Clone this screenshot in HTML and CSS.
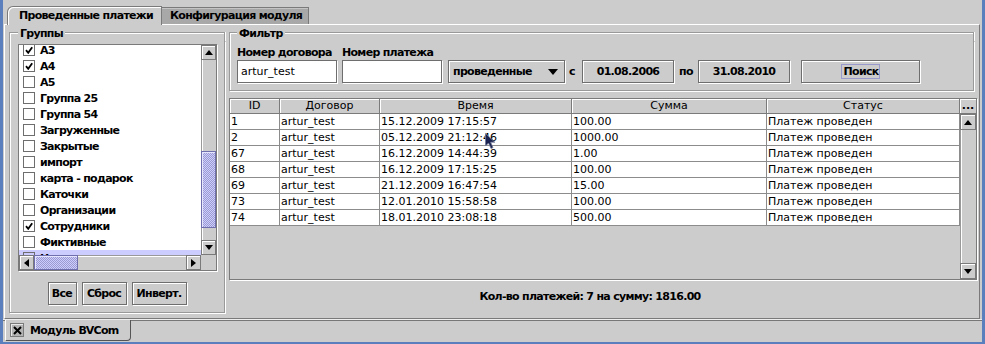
FILE: index.html
```html
<!DOCTYPE html>
<html lang="ru">
<head>
<meta charset="utf-8">
<title>Модуль BVCom</title>
<link rel="stylesheet" href="styles.css">
</head>
<body>
<div class="frame">
  <div class="main">
    <div class="tabs">
      <div class="tab tab-sel">Проведенные платежи</div>
      <div class="tab tab-off">Конфигурация модуля</div>
    </div>
    <div class="content">
      <section class="tbox groups">
        <div class="ttl"><span>Группы</span></div>
        <div class="tbody-box gbody">
          <div class="list-scroll">
            <div class="list-view">
              <div class="list">
                <div class="item"><span class="cb"><svg width="8" height="8" viewBox="0 0 8 8"><path d="M1 4.2 L3.2 6.8 L7.2 1.2" fill="none" stroke="#000" stroke-width="1.8"/></svg></span>А3</div>
                <div class="item"><span class="cb"><svg width="8" height="8" viewBox="0 0 8 8"><path d="M1 4.2 L3.2 6.8 L7.2 1.2" fill="none" stroke="#000" stroke-width="1.8"/></svg></span>А4</div>
                <div class="item"><span class="cb"></span>А5</div>
                <div class="item"><span class="cb"></span>Группа 25</div>
                <div class="item"><span class="cb"></span>Группа 54</div>
                <div class="item"><span class="cb"></span>Загруженные</div>
                <div class="item"><span class="cb"></span>Закрытые</div>
                <div class="item"><span class="cb"></span>импорт</div>
                <div class="item"><span class="cb"></span>карта - подарок</div>
                <div class="item"><span class="cb"></span>Каточки</div>
                <div class="item"><span class="cb"></span>Организации</div>
                <div class="item"><span class="cb"><svg width="8" height="8" viewBox="0 0 8 8"><path d="M1 4.2 L3.2 6.8 L7.2 1.2" fill="none" stroke="#000" stroke-width="1.8"/></svg></span>Сотрудники</div>
                <div class="item"><span class="cb"></span>Фиктивные</div>
                <div class="item hl"><span class="cb"></span>Новые</div>
              </div>
            </div>
            <div class="vbar">
              <div class="arr"><svg width="8" height="5" viewBox="0 0 8 5"><polygon points="0,5 4,0 8,5" fill="#000"/></svg></div>
              <div class="track vtrack"><div class="thumb vthumb"></div></div>
              <div class="arr"><svg width="8" height="5" viewBox="0 0 8 5"><polygon points="0,0 8,0 4,5" fill="#000"/></svg></div>
            </div>
            <div class="hbar">
              <div class="arr"><svg width="5" height="8" viewBox="0 0 5 8"><polygon points="5,0 5,8 0,4" fill="#000"/></svg></div>
              <div class="track htrack"><div class="thumb hthumb"></div></div>
              <div class="arr"><svg width="5" height="8" viewBox="0 0 5 8"><polygon points="0,0 5,4 0,8" fill="#000"/></svg></div>
            </div>
            <div class="corner"></div>
          </div>
          <div class="btns">
            <div class="btn b-all">Все</div>
            <div class="btn b-reset">Сброс</div>
            <div class="btn b-inv">Инверт.</div>
          </div>
        </div>
      </section>
      <div class="right">
        <section class="tbox filter">
          <div class="ttl ttl-filter"><span>Фильтр</span></div>
          <div class="tbody-box frow">
            <div class="fcol c1">
              <div class="flabel">Номер договора</div>
              <div class="tf">artur_test</div>
            </div>
            <div class="fcol c2">
              <div class="flabel">Номер платежа</div>
              <div class="tf"></div>
            </div>
            <div class="combo"><span>проведенные</span><svg width="10" height="6" viewBox="0 0 10 6"><polygon points="0,0 10,0 5,6" fill="#000"/></svg></div>
            <div class="sep s1">с</div>
            <div class="btn date">01.08.2006</div>
            <div class="sep s2">по</div>
            <div class="btn date">31.08.2010</div>
            <div class="btn search"><span class="focus">Поиск</span></div>
          </div>
        </section>
        <div class="tscroll">
          <div class="thead">
            <div class="th">ID</div>
            <div class="th">Договор</div>
            <div class="th">Время</div>
            <div class="th">Сумма</div>
            <div class="th">Статус</div>
          </div>
          <div class="tcorner">...</div>
          <div class="tbody">
            <div class="tr"><div class="td">1</div><div class="td">artur_test</div><div class="td">15.12.2009 17:15:57</div><div class="td">100.00</div><div class="td">Платеж проведен</div></div>
            <div class="tr"><div class="td">2</div><div class="td">artur_test</div><div class="td">05.12.2009 21:12:46</div><div class="td">1000.00</div><div class="td">Платеж проведен</div></div>
            <div class="tr"><div class="td">67</div><div class="td">artur_test</div><div class="td">16.12.2009 14:44:39</div><div class="td">1.00</div><div class="td">Платеж проведен</div></div>
            <div class="tr"><div class="td">68</div><div class="td">artur_test</div><div class="td">16.12.2009 17:15:25</div><div class="td">100.00</div><div class="td">Платеж проведен</div></div>
            <div class="tr"><div class="td">69</div><div class="td">artur_test</div><div class="td">21.12.2009 16:47:54</div><div class="td">15.00</div><div class="td">Платеж проведен</div></div>
            <div class="tr"><div class="td">73</div><div class="td">artur_test</div><div class="td">12.01.2010 15:58:58</div><div class="td">100.00</div><div class="td">Платеж проведен</div></div>
            <div class="tr"><div class="td">74</div><div class="td">artur_test</div><div class="td">18.01.2010 23:08:18</div><div class="td">500.00</div><div class="td">Платеж проведен</div></div>
            <svg class="cursor" width="11" height="17" viewBox="0 0 11 17"><polygon points="0.5,0.5 0.5,13 3.5,10 6,15.5 8,14.6 5.6,9.2 9.8,9.2" fill="#1b2450" stroke="#6f7796" stroke-width="0.8"/></svg>
          </div>
          <div class="vbar tvbar">
            <div class="arr tarr"><svg width="8" height="5" viewBox="0 0 8 5"><polygon points="0,5 4,0 8,5" fill="#000"/></svg></div>
            <div class="track vtrack"></div>
            <div class="arr tarr"><svg width="8" height="5" viewBox="0 0 8 5"><polygon points="0,0 8,0 4,5" fill="#000"/></svg></div>
          </div>
        </div>
        <div class="summary">Кол-во платежей: 7 на сумму: 1816.00</div>
      </div>
    </div>
  </div>
  <div class="btabs">
    <div class="btab"><span class="xbox"><svg width="9" height="9" viewBox="0 0 9 9"><path d="M1 1 L8 8 M8 1 L1 8" stroke="#000" stroke-width="2"/></svg></span>Модуль BVCom</div>
  </div>
</div>
</body>
</html>
```

FILE: styles.css
```css
* { box-sizing: border-box; }
html, body { margin: 0; padding: 0; }
body {
  width: 985px;
  height: 344px;
  overflow: hidden;
  background: #ccc;
  font-family: "DejaVu Sans", sans-serif;
  font-size: 11px;
  color: #000;
}
.tab, .ttl, .item, .btn, .flabel, .combo, .sep, .summary, .btab {
  font-weight: bold;
  letter-spacing: -0.7px;
}
.frame {
  width: 985px;
  height: 344px;
  border-left: 3px solid #5b7ebc;
  border-right: 3px solid #5b7ebc;
  border-bottom: 2px solid #5b7ebc;
  background: #ccc;
}
.main {
  height: 321px;
  padding: 6px 2px 0 1px;
  border-bottom: 1px solid #777;
  box-shadow: inset 0 -1px #eeeeee;
}
.tabs {
  display: flex;
  height: 18px;
  padding-left: 3px;
  position: relative;
  z-index: 1;
}
.tab {
  white-space: nowrap;
  line-height: 16px;
}
.tab-sel {
  width: 155px;
  height: 19px;
  padding: 1px 0 0 11px;
  background: #ccc;
  border: 1px solid #7a7a7a;
  border-bottom: 0;
  border-top-left-radius: 6px;
  box-shadow: inset 1px 1px #fff;
}
.tab-off {
  width: 147px;
  height: 17px;
  margin-top: 1px;
  padding-left: 8px;
  background: #a8a8a8;
  border-top: 1px solid #7a7a7a;
  border-right: 1px solid #7a7a7a;
  box-shadow: inset 0 1px #c4c4c4;
}
.content {
  height: 295px;
  display: flex;
  gap: 4px;
  padding: 2px 0 0 4px;
  border: 1px solid #7a7a7a;
  border-top-color: #fff;
  border-left-color: #fff;
}

/* titled (etched) boxes */
.tbox {
  display: flex;
  flex-direction: column;
}
.ttl {
  flex: none;
  display: flex;
  height: 14px;
  line-height: 14px;
  white-space: nowrap;
}
.ttl span { padding: 0 2px; }
.ttl::before,
.ttl::after {
  content: "";
  align-self: flex-end;
  height: 8px;
  border-top: 1px solid #999;
}
.ttl::before {
  flex: none;
  width: 8px;
  border-left: 1px solid #999;
  box-shadow: inset 1px 1px #fff;
}
.ttl-filter::before { width: 7px; }
.ttl::after {
  flex: 1;
  border-right: 1px solid #999;
  box-shadow: inset 0 1px #fff, 1px 0 #fff;
}
.tbody-box {
  flex: 1;
  border: 1px solid #999;
  border-top: 0;
  box-shadow: inset 1px 0 #fff, 1px 1px #fff;
}
.groups {
  flex: none;
  width: 216px;
  height: 286px;
}
.gbody {
  padding: 3px 0 0 8px;
}

/* list with scrollbars */
.list-scroll {
  width: 199px;
  display: grid;
  grid-template-columns: 182px 15px;
  grid-template-rows: 210px 15px;
  border: 1px solid #7a7a7a;
  box-shadow: 1px 1px #fff;
}
.list-view {
  background: #fff;
  overflow: hidden;
}
.list { margin-top: -3px; }
.item {
  height: 16px;
  display: flex;
  align-items: center;
  padding-left: 4px;
  white-space: nowrap;
}
.item.hl { background: #ccccff; }
.cb {
  flex: none;
  width: 12px;
  height: 12px;
  margin-right: 5px;
  border: 1px solid #6e6e6e;
  display: flex;
  align-items: center;
  justify-content: center;
}
.cb svg { display: block; }

.vbar {
  display: flex;
  flex-direction: column;
  background: #ccc;
}
.hbar {
  display: flex;
  background: #ccc;
}
.arr {
  flex: none;
  width: 15px;
  height: 15px;
  display: flex;
  align-items: center;
  justify-content: center;
  background: #ccc;
  border: 1px solid #7a7a7a;
  box-shadow: inset 1px 1px #fff;
}
.arr svg { display: block; }
.track {
  flex: 1;
  background: #ccc;
}
.vtrack {
  border-left: 1px solid #999;
  box-shadow: inset 1px 0 #fff;
}
.htrack {
  border-top: 1px solid #999;
  box-shadow: inset 0 1px #fff;
}
.thumb {
  background: repeating-conic-gradient(#9c9cd0 0 25%, #ccccff 0 50%) 0 0 / 2px 2px;
  border: 1px solid #6f6fae;
  box-shadow: inset 1px 1px #e6e6ff;
}
.vthumb {
  margin-top: 91px;
  height: 77px;
  margin-left: -1px;
}
.hthumb {
  width: 44px;
  height: 15px;
  margin-top: -1px;
}
.corner { background: #ccc; }

/* buttons */
.btns {
  display: flex;
  justify-content: center;
  gap: 5px;
  margin-top: 11px;
  padding-right: 8px;
}
.btn {
  height: 23px;
  background: #ccc;
  border: 1px solid #6e6e6e;
  box-shadow: inset 1px 1px #fff, 1px 1px #fff;
  line-height: 21px;
  text-align: center;
  white-space: nowrap;
}
.b-all { width: 29px; }
.b-reset { width: 45px; }
.b-inv { width: 55px; }

/* right column */
.right {
  flex: none;
  width: 749px;
  display: flex;
  flex-direction: column;
}
.filter {
  width: 745px;
  height: 64px;
}
.frow {
  display: flex;
  align-items: flex-end;
  padding: 5px 0 7px 7px;
}
.fcol {
  display: flex;
  flex-direction: column;
}
.c1 { margin-right: 5px; }
.c2 { margin-right: 6px; }
.flabel {
  line-height: 13px;
  margin-bottom: 1px;
  white-space: nowrap;
}
.tf {
  width: 100px;
  height: 23px;
  background: #fff;
  border: 1px solid #6e6e6e;
  box-shadow: 1px 1px #fff;
  padding: 0 3px;
  line-height: 21px;
}
.combo {
  width: 117px;
  height: 23px;
  display: flex;
  align-items: center;
  justify-content: space-between;
  padding: 0 6px 0 4px;
  background: #ccc;
  border: 1px solid #6e6e6e;
  box-shadow: inset 1px 1px #fff, 1px 1px #fff;
}
.combo svg { display: block; }
.sep {
  height: 23px;
  line-height: 23px;
}
.s1 { width: 17px; padding-left: 4px; }
.s2 { width: 24px; padding-left: 5px; }
.date { width: 92px; }
.search {
  width: 119px;
  margin-left: 11px;
  display: flex;
  align-items: center;
  justify-content: center;
}
.focus {
  border: 1px solid #9999cc;
  line-height: 13px;
  padding: 0 1px 0 2px;
}

/* table */
.tscroll {
  margin-top: 7px;
  width: 748px;
  height: 182px;
  display: grid;
  grid-template-columns: 730px 16px;
  grid-template-rows: 15px 165px;
  border: 1px solid #7a7a7a;
  box-shadow: 1px 1px #fff;
  background: #ccc;
}
.thead, .tr {
  display: grid;
  grid-template-columns: 50px 100px 192px 195px 193px;
}
.th {
  text-align: center;
  line-height: 14px;
  border-right: 1px solid #7a7a7a;
  border-bottom: 1px solid #7a7a7a;
  box-shadow: inset 1px 1px #fff;
  white-space: nowrap;
}
.tcorner {
  border-bottom: 1px solid #7a7a7a;
  box-shadow: inset 1px 1px #fff;
  font-weight: bold;
  text-align: center;
  line-height: 13px;
}
.tbody {
  position: relative;
  overflow: hidden;
}
.tr {
  height: 16px;
  background: #fff;
}
.td {
  border-right: 1px solid #8c8c8c;
  border-bottom: 1px solid #8c8c8c;
  padding-left: 1px;
  line-height: 15px;
  white-space: nowrap;
  overflow: hidden;
}
.tvbar .tarr {
  width: 16px;
  height: 16px;
}
.cursor {
  position: absolute;
  left: 255px;
  top: 19px;
}
.summary {
  text-align: center;
  line-height: 13px;
  padding: 10px 27px 0 0;
  white-space: nowrap;
}

/* bottom tab strip */
.btabs {
  height: 21px;
  padding-left: 2px;
  display: flex;
}
.btab {
  margin-top: -1px;
  width: 126px;
  height: 21px;
  display: flex;
  align-items: center;
  padding-left: 4px;
  background: #ccc;
  border-left: 1px solid #fff;
  border-right: 1px solid #555;
  border-bottom: 1px solid #555;
  border-bottom-right-radius: 4px;
  white-space: nowrap;
}
.xbox {
  flex: none;
  width: 14px;
  height: 14px;
  margin-right: 6px;
  display: flex;
  align-items: center;
  justify-content: center;
  background: #b4b4b4;
  border: 1px solid #7a7a7a;
  box-shadow: inset 1px 1px #e8e8e8;
}
.xbox svg { display: block; }
```
